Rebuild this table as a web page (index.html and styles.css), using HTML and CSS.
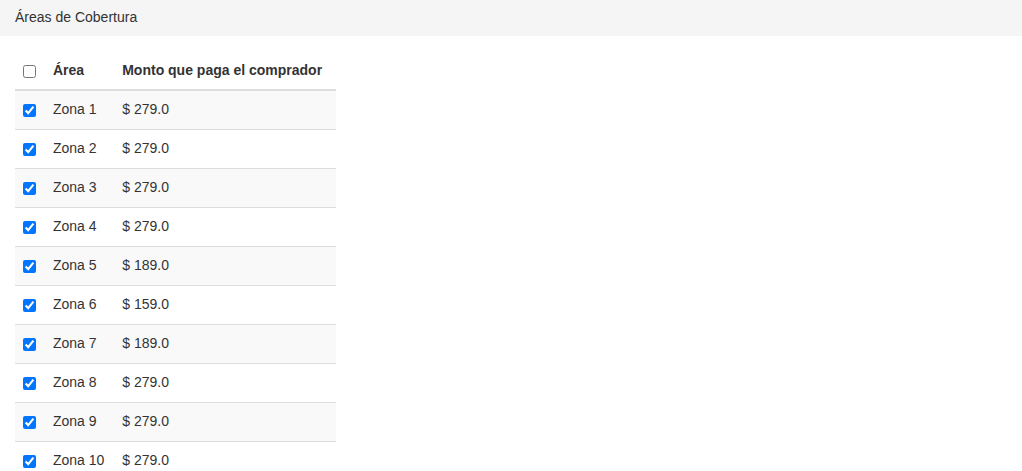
FILE: index.html
```html
<!DOCTYPE html>
<html lang="es">
<head>
    <meta charset="UTF-8">
    <meta name="viewport" content="width=device-width, initial-scale=1.0">
    <title>Áreas de Cobertura</title>
    <link rel="stylesheet" href="styles.css">
</head>
<body>
    <div class="panel">
        <div class="panel-heading">Áreas de Cobertura</div>
        <div class="panel-body">
            <table class="zones">
                <thead>
                    <tr>
                        <th class="check"><input type="checkbox"></th>
                        <th>Área</th>
                        <th>Monto que paga el comprador</th>
                    </tr>
                </thead>
                <tbody>
                    <tr><td class="check"><input type="checkbox" checked></td><td>Zona 1</td><td>$ 279.0</td></tr>
                    <tr><td class="check"><input type="checkbox" checked></td><td>Zona 2</td><td>$ 279.0</td></tr>
                    <tr><td class="check"><input type="checkbox" checked></td><td>Zona 3</td><td>$ 279.0</td></tr>
                    <tr><td class="check"><input type="checkbox" checked></td><td>Zona 4</td><td>$ 279.0</td></tr>
                    <tr><td class="check"><input type="checkbox" checked></td><td>Zona 5</td><td>$ 189.0</td></tr>
                    <tr><td class="check"><input type="checkbox" checked></td><td>Zona 6</td><td>$ 159.0</td></tr>
                    <tr><td class="check"><input type="checkbox" checked></td><td>Zona 7</td><td>$ 189.0</td></tr>
                    <tr><td class="check"><input type="checkbox" checked></td><td>Zona 8</td><td>$ 279.0</td></tr>
                    <tr><td class="check"><input type="checkbox" checked></td><td>Zona 9</td><td>$ 279.0</td></tr>
                    <tr><td class="check"><input type="checkbox" checked></td><td>Zona 10</td><td>$ 279.0</td></tr>
                </tbody>
            </table>
        </div>
    </div>
</body>
</html>
```

FILE: styles.css
```css
body {
    font-family: "Liberation Sans", Arial, sans-serif;
    font-size: 14px;
    line-height: 20px;
    color: #333;
    margin: 0;
    padding: 0;
    background-color: #fff;
}

.panel-heading {
    background-color: #f5f5f5;
    padding: 7px 15px 9px;
    height: 20px;
}

.panel-body {
    padding: 15px;
}

.zones {
    border-collapse: collapse;
    width: 321px;
}

.zones th, .zones td {
    text-align: left;
    padding: 9px 8px;
    vertical-align: middle;
    white-space: nowrap;
}

.zones th {
    font-weight: bold;
    border-bottom: 2px solid #ddd;
}

.zones td {
    border-top: 1px solid #ddd;
    padding-top: 8px;
    padding-bottom: 10px;
}

.zones tbody tr:nth-child(odd) {
    background-color: #f9f9f9;
}

.zones .check {
    width: 13px;
    padding-right: 9px;
}

.zones input[type="checkbox"] {
    margin: 0;
    width: 13px;
    height: 13px;
    vertical-align: middle;
}
```
